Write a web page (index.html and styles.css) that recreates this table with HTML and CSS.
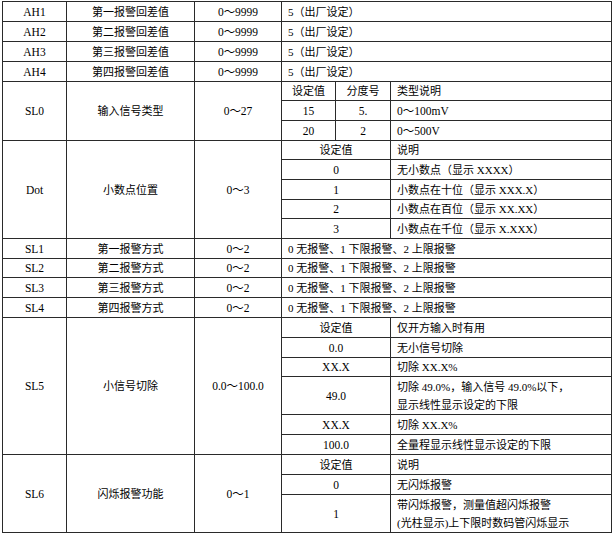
FILE: index.html
```html
<!DOCTYPE html>
<html lang="zh">
<head>
<meta charset="utf-8">
<link rel="stylesheet" href="styles.css">
</head>
<body>
<table class="param">
  <colgroup>
    <col class="c1"><col class="c2"><col class="c3"><col class="c4"><col class="c5"><col class="c6">
  </colgroup>
  <tbody>
    <tr class="h20"><td class="n">AH1</td><td>第一报警回差值</td><td class="n">0～9999</td><td colspan="3" class="l">5（出厂设定）</td></tr>
    <tr class="h20"><td class="n">AH2</td><td>第二报警回差值</td><td class="n">0～9999</td><td colspan="3" class="l">5（出厂设定）</td></tr>
    <tr class="h20"><td class="n">AH3</td><td>第三报警回差值</td><td class="n">0～9999</td><td colspan="3" class="l">5（出厂设定）</td></tr>
    <tr class="h20"><td class="n">AH4</td><td>第四报警回差值</td><td class="n">0～9999</td><td colspan="3" class="l">5（出厂设定）</td></tr>

    <tr class="h19"><td rowspan="3" class="n">SL0</td><td rowspan="3">输入信号类型</td><td rowspan="3" class="n">0～27</td><td>设定值</td><td>分度号</td><td class="l">类型说明</td></tr>
    <tr class="h20"><td class="n">15</td><td class="n">5.</td><td class="l n">0～100mV</td></tr>
    <tr class="h20"><td class="n">20</td><td class="n">2</td><td class="l n">0～500V</td></tr>

    <tr class="h19"><td rowspan="5" class="n">Dot</td><td rowspan="5">小数点位置</td><td rowspan="5" class="n">0～3</td><td colspan="2">设定值</td><td class="l">说明</td></tr>
    <tr class="h20"><td colspan="2" class="n">0</td><td class="l">无小数点（显示 XXXX）</td></tr>
    <tr class="h20"><td colspan="2" class="n">1</td><td class="l">小数点在十位（显示 XXX.X）</td></tr>
    <tr class="h19"><td colspan="2" class="n">2</td><td class="l">小数点在百位（显示 XX.XX）</td></tr>
    <tr class="h20"><td colspan="2" class="n">3</td><td class="l">小数点在千位（显示 X.XXX）</td></tr>

    <tr class="h20"><td class="n">SL1</td><td>第一报警方式</td><td class="n">0～2</td><td colspan="3" class="l">0 无报警、1 下限报警、2 上限报警</td></tr>
    <tr class="h19"><td class="n">SL2</td><td>第二报警方式</td><td class="n">0～2</td><td colspan="3" class="l">0 无报警、1 下限报警、2 上限报警</td></tr>
    <tr class="h20"><td class="n">SL3</td><td>第三报警方式</td><td class="n">0～2</td><td colspan="3" class="l">0 无报警、1 下限报警、2 上限报警</td></tr>
    <tr class="h20"><td class="n">SL4</td><td>第四报警方式</td><td class="n">0～2</td><td colspan="3" class="l">0 无报警、1 下限报警、2 上限报警</td></tr>

    <tr class="h20"><td rowspan="6" class="n">SL5</td><td rowspan="6">小信号切除</td><td rowspan="6" class="n">0.0～100.0</td><td colspan="2">设定值</td><td class="l">仅开方输入时有用</td></tr>
    <tr class="h20"><td colspan="2" class="n">0.0</td><td class="l">无小信号切除</td></tr>
    <tr class="h19"><td colspan="2" class="n">XX.X</td><td class="l">切除 XX.X%</td></tr>
    <tr class="h38"><td colspan="2" class="n">49.0</td><td class="l two">切除 49.0%，输入信号 49.0%以下，<br>显示线性显示设定的下限</td></tr>
    <tr class="h20"><td colspan="2" class="n">XX.X</td><td class="l">切除 XX.X%</td></tr>
    <tr class="h20"><td colspan="2" class="n">100.0</td><td class="l">全量程显示线性显示设定的下限</td></tr>

    <tr class="h20"><td rowspan="3" class="n">SL6</td><td rowspan="3">闪烁报警功能</td><td rowspan="3" class="n">0～1</td><td colspan="2">设定值</td><td class="l">说明</td></tr>
    <tr class="h20"><td colspan="2" class="n">0</td><td class="l">无闪烁报警</td></tr>
    <tr class="h38"><td colspan="2" class="n">1</td><td class="l two">带闪烁报警，测量值超闪烁报警<br>(光柱显示)上下限时数码管闪烁显示</td></tr>
  </tbody>
</table>
</body>
</html>
```
FILE: styles.css
```css
html, body {
  margin: 0;
  padding: 0;
  background: #ffffff;
}
body {
  padding: 1px 3px 0 2px;
  font-family: "Liberation Serif", "Noto Sans CJK SC", serif;
  font-size: 11px;
  color: #000000;
}
.param {
  border-collapse: collapse;
  table-layout: fixed;
  width: 609px;
}
.c1 { width: 64px; }
.c2 { width: 128px; }
.c3 { width: 87px; }
.c4 { width: 54px; }
.c5 { width: 55px; }
.c6 { width: 221px; }
.param td {
  border: 1px solid #2a2a2a;
  padding: 0;
  text-align: center;
  vertical-align: middle;
  line-height: 16px;
  white-space: nowrap;
  overflow: hidden;
}
.param td.n {
  font-size: 11.5px;
}
.param td.l {
  text-align: left;
  padding-left: 6px;
}
.param td.two {
  line-height: 18px;
}
.h19 { height: 19px; }
.h20 { height: 20px; }
.h38 { height: 38px; }
```
